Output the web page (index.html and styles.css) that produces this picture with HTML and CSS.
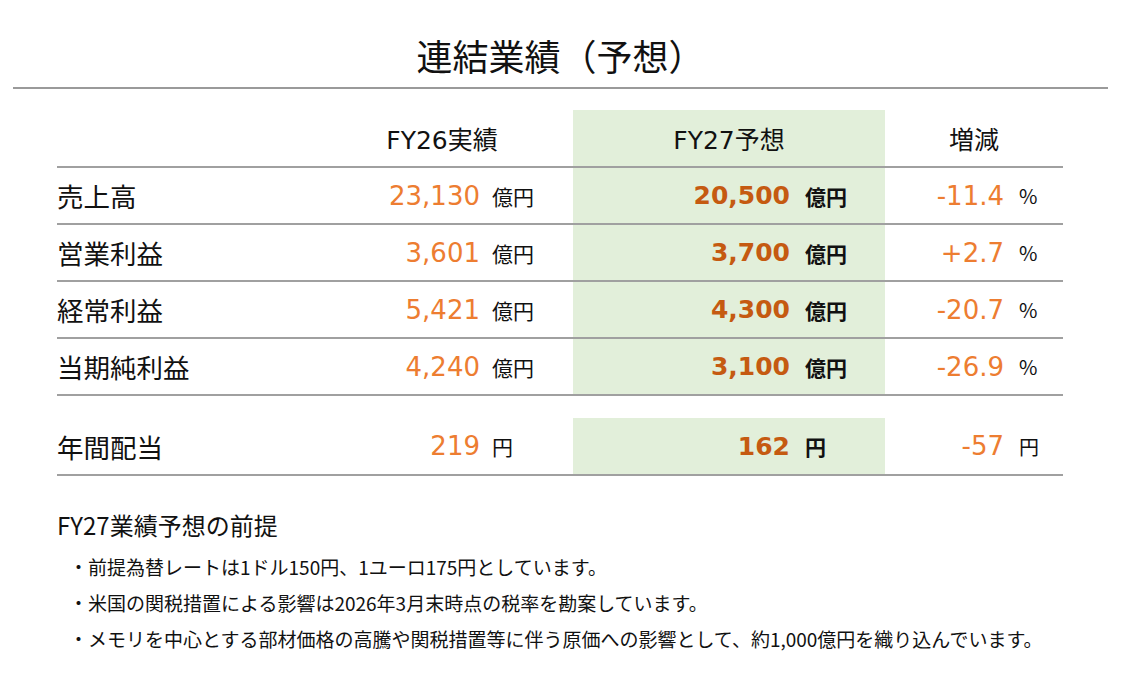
FILE: index.html
```html
<!DOCTYPE html>
<html lang="ja">
<head>
<meta charset="utf-8">
<title>連結業績（予想）</title>
<link rel="stylesheet" href="styles.css">
</head>
<body>
<header class="title">連結業績（予想）</header>
<section class="table">
  <div class="row head">
    <div class="cell label"></div>
    <div class="cell col-a center">FY26実績</div>
    <div class="cell col-b center">FY27予想</div>
    <div class="cell col-c center">増減</div>
  </div>
  <div class="row">
    <div class="cell label">売上高</div>
    <div class="cell col-a"><span class="num">23,130</span><span class="unit">億円</span></div>
    <div class="cell col-b"><span class="num">20,500</span><span class="unit">億円</span></div>
    <div class="cell col-c"><span class="num">-11.4</span><span class="unit">%</span></div>
  </div>
  <div class="row">
    <div class="cell label">営業利益</div>
    <div class="cell col-a"><span class="num">3,601</span><span class="unit">億円</span></div>
    <div class="cell col-b"><span class="num">3,700</span><span class="unit">億円</span></div>
    <div class="cell col-c"><span class="num">+2.7</span><span class="unit">%</span></div>
  </div>
  <div class="row">
    <div class="cell label">経常利益</div>
    <div class="cell col-a"><span class="num">5,421</span><span class="unit">億円</span></div>
    <div class="cell col-b"><span class="num">4,300</span><span class="unit">億円</span></div>
    <div class="cell col-c"><span class="num">-20.7</span><span class="unit">%</span></div>
  </div>
  <div class="row">
    <div class="cell label">当期純利益</div>
    <div class="cell col-a"><span class="num">4,240</span><span class="unit">億円</span></div>
    <div class="cell col-b"><span class="num">3,100</span><span class="unit">億円</span></div>
    <div class="cell col-c"><span class="num">-26.9</span><span class="unit">%</span></div>
  </div>
  <div class="row dividend">
    <div class="cell label">年間配当</div>
    <div class="cell col-a"><span class="num">219</span><span class="unit">円</span></div>
    <div class="cell col-b"><span class="num">162</span><span class="unit">円</span></div>
    <div class="cell col-c"><span class="num">-57</span><span class="unit">円</span></div>
  </div>
</section>
<section class="notes">
  <h2 class="notes-title">FY27業績予想の前提</h2>
  <ul class="notes-list">
    <li>・前提為替レートは1ドル150円、1ユーロ175円としています。</li>
    <li>・米国の関税措置による影響は2026年3月末時点の税率を勘案しています。</li>
    <li>・メモリを中心とする部材価格の高騰や関税措置等に伴う原価への影響として、約1,000億円を織り込んでいます。</li>
  </ul>
</section>
</body>
</html>
```

FILE: styles.css
```css
* { box-sizing: border-box; }
body {
  margin: 0;
  background: #ffffff;
  color: #111111;
  font-family: "Noto Sans CJK JP", "Noto Sans", sans-serif;
  width: 1121px;
  height: 674px;
  overflow: hidden;
}
.title {
  margin: 0 13px;
  padding-top: 30px;
  padding-bottom: 7px;
  line-height: 50px;
  font-size: 36px;
  text-align: center;
  border-bottom: 2px solid #9a9a9a;
}
.table {
  margin: 21px 0 0 57px;
  width: 1006px;
}
.row {
  display: grid;
  grid-template-columns: 254px 262px 312px 178px;
  height: 57px;
  border-bottom: 2px solid #a0a0a0;
}
.row.head { height: 58px; }
.row.dividend {
  margin-top: 22px;
  height: 58px;
}
.cell {
  display: flex;
  align-items: center;
  height: 100%;
}
.center {
  justify-content: center;
  font-family: "DejaVu Sans", "Noto Sans CJK JP", sans-serif;
  font-size: 25px;
}
.label {
  font-size: 26.5px;
}
.col-b { background: #e2efda; }
.num {
  flex: 1;
  text-align: right;
  font-family: "DejaVu Sans", "Noto Sans CJK JP", sans-serif;
  font-size: 26px;
  color: #ed7d31;
}
.unit {
  font-size: 21px;
  color: #111111;
  width: 93px;
  padding-left: 12px;
}
.col-b .num {
  font-weight: 700;
  font-size: 25px;
  color: #c55a11;
  padding-right: 2px;
}
.col-b .unit {
  font-weight: 700;
  padding-left: 13px;
}
.col-c .unit {
  width: 59px;
  padding-left: 15px;
  font-size: 20px;
}
.notes {
  margin: 33px 0 0 57px;
}
.notes-title {
  margin: 0;
  font-size: 24px;
  font-weight: 400;
  line-height: 32px;
}
.notes-list {
  list-style: none;
  margin: 8px 0 0 0;
  padding: 0 0 0 12px;
  font-size: 19px;
  line-height: 36px;
}
```
